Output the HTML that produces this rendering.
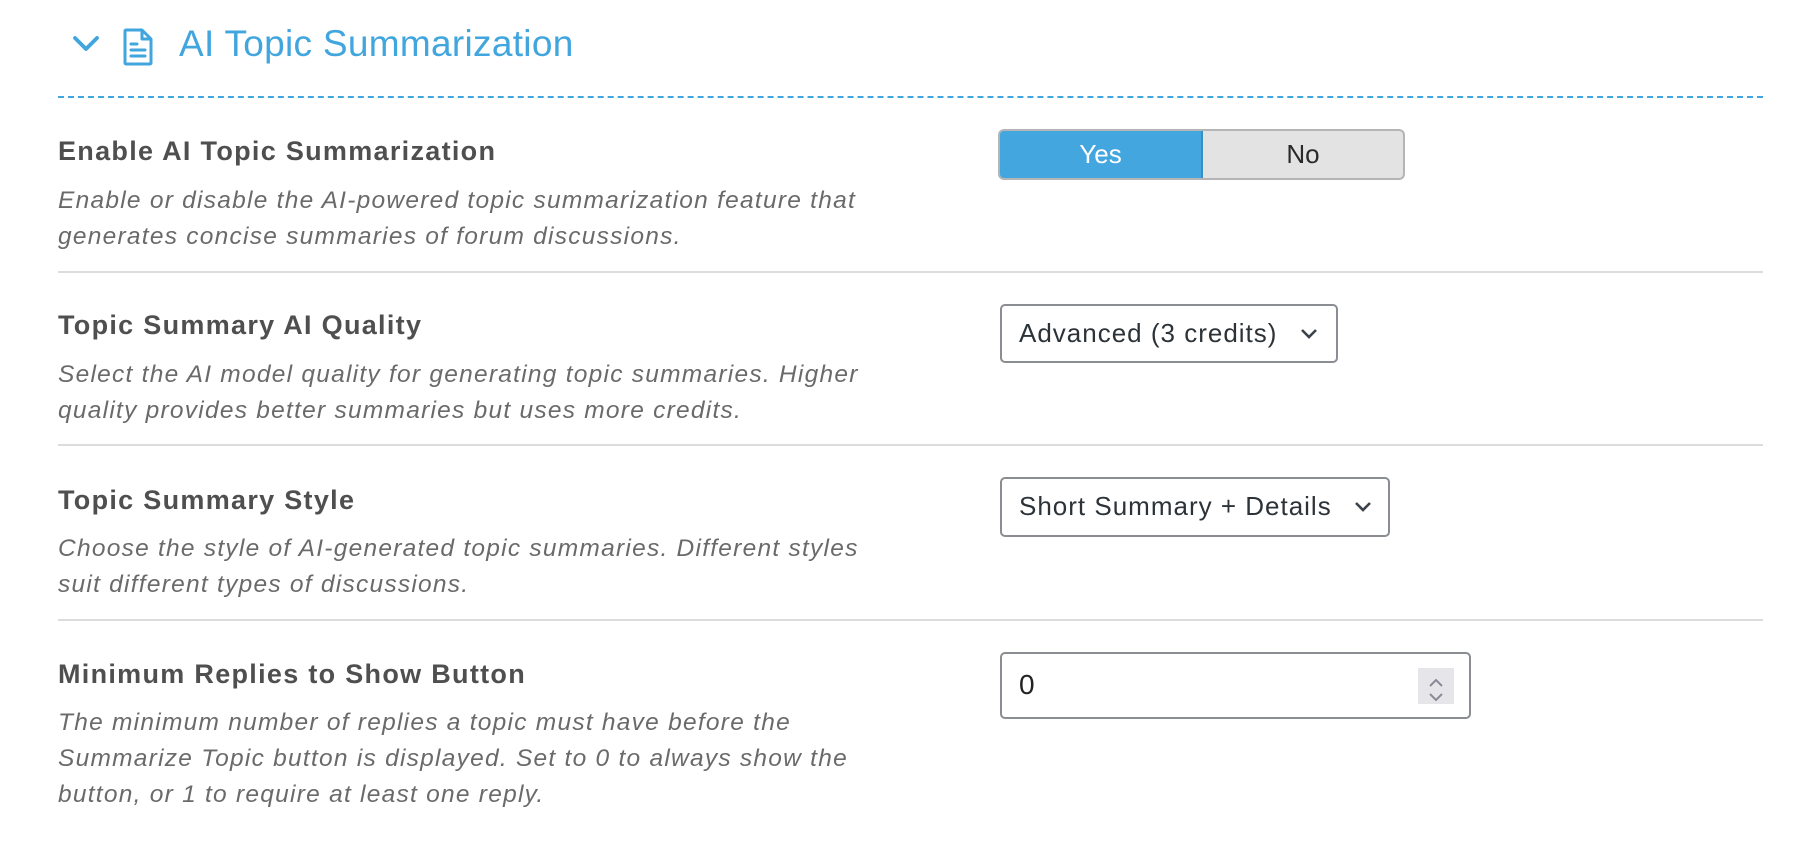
<!DOCTYPE html>
<html><head><meta charset="utf-8"><style>
body{margin:0;width:1813px;height:845px;background:#fff;font-family:"Liberation Sans",sans-serif;position:relative;overflow:hidden}
.a{position:absolute;white-space:nowrap}
.t{left:179px;top:22px;font-size:37px;letter-spacing:0.3px;color:#41a5de;line-height:44px}
.dash{left:58px;top:96px;width:1705px;border-top:2px dashed #41a5de}
.lab{left:58px;font-size:27px;letter-spacing:1.3px;font-weight:bold;color:#4f4f4f;line-height:30px}
.desc{left:58px;font-size:24.5px;letter-spacing:1.25px;font-style:italic;color:#6a6a6a;line-height:36px}
.sep{left:58px;width:1705px;height:2px;background:#dcdcdc}
.sel{border:2px solid #8a8d91;border-radius:5px;font-size:26px;letter-spacing:1px;color:#2c3338;box-sizing:border-box;padding-left:17px;line-height:54px}
</style></head><body>
<svg class="a" style="left:72px;top:34px" width="28" height="20" viewBox="0 0 28 20"><path d="M3 4l11 11 11-11" fill="none" stroke="#41a5de" stroke-width="3.8" stroke-linecap="round" stroke-linejoin="round"/></svg>
<svg class="a" style="left:122px;top:28px" width="32" height="38" viewBox="0 0 32 38"><path d="M4 2h16l9 9v24a1 1 0 0 1-1 1H4a1 1 0 0 1-1-1V3a1 1 0 0 1 1-1z M20 2v9h9" fill="none" stroke="#41a5de" stroke-width="3" stroke-linejoin="round"/><path d="M9 16h6M9 22h14M9 28h14" stroke="#41a5de" stroke-width="3" stroke-linecap="round"/></svg>
<div class="a t">AI Topic Summarization</div>
<div class="a dash"></div>

<div class="a lab" style="top:136px">Enable AI Topic Summarization</div>
<div class="a desc" style="top:183px">Enable or disable the AI-powered topic summarization feature that<br>generates concise summaries of forum discussions.</div>
<div class="a" style="left:998px;top:129px;width:407px;height:51px;border-radius:6px;overflow:hidden;box-sizing:border-box;border:2px solid #b5b5b5;background:#e3e3e3">
<div style="position:absolute;left:-2px;top:-2px;width:205px;height:51px;background:#43a6df;border:2px solid #3a8fc2;box-sizing:border-box;border-radius:6px 0 0 6px;color:#fff;font-size:26px;text-align:center;line-height:46px">Yes</div>
<div style="position:absolute;left:203px;top:0;right:0;height:47px;color:#2a2a2a;font-size:26px;text-align:center;line-height:46px">No</div>
</div>
<div class="a sep" style="top:271px"></div>

<div class="a lab" style="top:310px">Topic Summary AI Quality</div>
<div class="a desc" style="top:357px">Select the AI model quality for generating topic summaries. Higher<br>quality provides better summaries but uses more credits.</div>
<div class="a sel" style="left:1000px;top:304px;width:338px;height:59px">Advanced (3 credits)<svg style="position:absolute;right:18px;top:22px" width="18" height="12" viewBox="0 0 18 12"><path d="M2 2l7 7 7-7" fill="none" stroke="#3c434a" stroke-width="2.6"/></svg></div>
<div class="a sep" style="top:444px"></div>

<div class="a lab" style="top:485px">Topic Summary Style</div>
<div class="a desc" style="top:531px">Choose the style of AI-generated topic summaries. Different styles<br>suit different types of discussions.</div>
<div class="a sel" style="left:1000px;top:477px;width:390px;height:60px">Short Summary + Details<svg style="position:absolute;right:16px;top:22px" width="18" height="12" viewBox="0 0 18 12"><path d="M2 2l7 7 7-7" fill="none" stroke="#3c434a" stroke-width="2.6"/></svg></div>
<div class="a sep" style="top:619px"></div>

<div class="a lab" style="top:659px">Minimum Replies to Show Button</div>
<div class="a desc" style="top:705px">The minimum number of replies a topic must have before the<br>Summarize Topic button is displayed. Set to 0 to always show the<br>button, or 1 to require at least one reply.</div>
<div class="a sel" style="left:1000px;top:652px;width:471px;height:67px;font-size:28px;line-height:62px;color:#222">0
<div style="position:absolute;left:416px;top:14px;width:36px;height:36px;background:#e6e6ea"><svg width="36" height="36" viewBox="0 0 36 36"><path d="M12 14l6-6 6 6M12 22l6 6 6-6" fill="none" stroke="#8a8a96" stroke-width="2"/></svg></div></div>
</body></html>
